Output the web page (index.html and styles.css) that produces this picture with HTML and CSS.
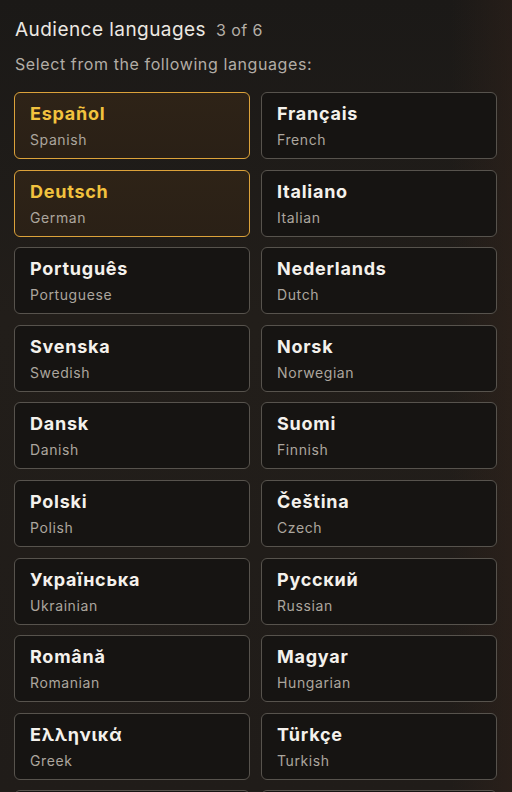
FILE: index.html
```html
<!DOCTYPE html>
<html lang="en">
<head>
<meta charset="utf-8">
<title>Audience languages</title>
<link rel="stylesheet" href="styles.css">
</head>
<body>
<main class="page">
  <header class="head">
    <h1 class="title">Audience languages</h1>
    <span class="count">3 of 6</span>
  </header>
  <p class="hint">Select from the following languages:</p>
  <div class="grid">
    <button class="card selected"><span class="native">Español</span><span class="eng">Spanish</span></button>
    <button class="card"><span class="native">Français</span><span class="eng">French</span></button>
    <button class="card selected"><span class="native">Deutsch</span><span class="eng">German</span></button>
    <button class="card"><span class="native">Italiano</span><span class="eng">Italian</span></button>
    <button class="card"><span class="native">Português</span><span class="eng">Portuguese</span></button>
    <button class="card"><span class="native">Nederlands</span><span class="eng">Dutch</span></button>
    <button class="card"><span class="native">Svenska</span><span class="eng">Swedish</span></button>
    <button class="card"><span class="native">Norsk</span><span class="eng">Norwegian</span></button>
    <button class="card"><span class="native">Dansk</span><span class="eng">Danish</span></button>
    <button class="card"><span class="native">Suomi</span><span class="eng">Finnish</span></button>
    <button class="card"><span class="native">Polski</span><span class="eng">Polish</span></button>
    <button class="card"><span class="native">Čeština</span><span class="eng">Czech</span></button>
    <button class="card"><span class="native">Українська</span><span class="eng">Ukrainian</span></button>
    <button class="card"><span class="native">Русский</span><span class="eng">Russian</span></button>
    <button class="card"><span class="native">Română</span><span class="eng">Romanian</span></button>
    <button class="card"><span class="native">Magyar</span><span class="eng">Hungarian</span></button>
    <button class="card"><span class="native">Ελληνικά</span><span class="eng">Greek</span></button>
    <button class="card"><span class="native">Türkçe</span><span class="eng">Turkish</span></button>
    <button class="card"><span class="native">Български</span><span class="eng">Bulgarian</span></button>
    <button class="card"><span class="native">Hrvatski</span><span class="eng">Croatian</span></button>
  </div>
</main>
</body>
</html>
```

FILE: styles.css
```css
html, body {
  margin: 0;
  padding: 0;
  height: 100%;
  overflow: hidden;
}
body {
  background:
    linear-gradient(90deg, rgba(0,0,0,0) 88%, rgba(58,38,28,0.35) 100%),
    linear-gradient(180deg, #1b1917 0%, #221e1a 40%, #201c19 100%);
  font-family: "Inter", "Noto Sans", sans-serif;
  color: #ece8e2;
}
.page {
  padding: 18px 15px 0 14px;
}
.head {
  display: flex;
  align-items: baseline;
  gap: 10px;
  padding-left: 1px;
}
.title {
  margin: 0;
  font-size: 19px;
  line-height: 24px;
  font-weight: 400;
  letter-spacing: 0.45px;
  color: #ece8e2;
}
.count {
  font-size: 16px;
  letter-spacing: 0.4px;
  color: #b5afa7;
}
.hint {
  margin: 12px 0 18px 1px;
  font-size: 16px;
  line-height: 20px;
  letter-spacing: 0.6px;
  color: #b3ada6;
}
.grid {
  display: grid;
  grid-template-columns: 236px 236px;
  column-gap: 11px;
  row-gap: 10.6px;
}
.card {
  display: flex;
  flex-direction: column;
  align-items: flex-start;
  height: 67px;
  box-sizing: border-box;
  padding: 10px 15px 9px 15px;
  margin: 0;
  border: 1px solid #57534d;
  border-radius: 6px;
  background: #161412;
  font-family: inherit;
  text-align: left;
  cursor: pointer;
}
.native {
  font-size: 18px;
  line-height: 22px;
  font-weight: 700;
  letter-spacing: 0.75px;
  color: #f4f1ec;
}
.eng {
  margin-top: 6px;
  font-size: 14px;
  line-height: 18px;
  letter-spacing: 0.6px;
  color: #aca69e;
}
.card.selected {
  border-color: #dca23a;
  background: linear-gradient(180deg, #2e2317 0%, #2a2016 100%);
}
.card.selected .native {
  color: #f2c23e;
}
```
